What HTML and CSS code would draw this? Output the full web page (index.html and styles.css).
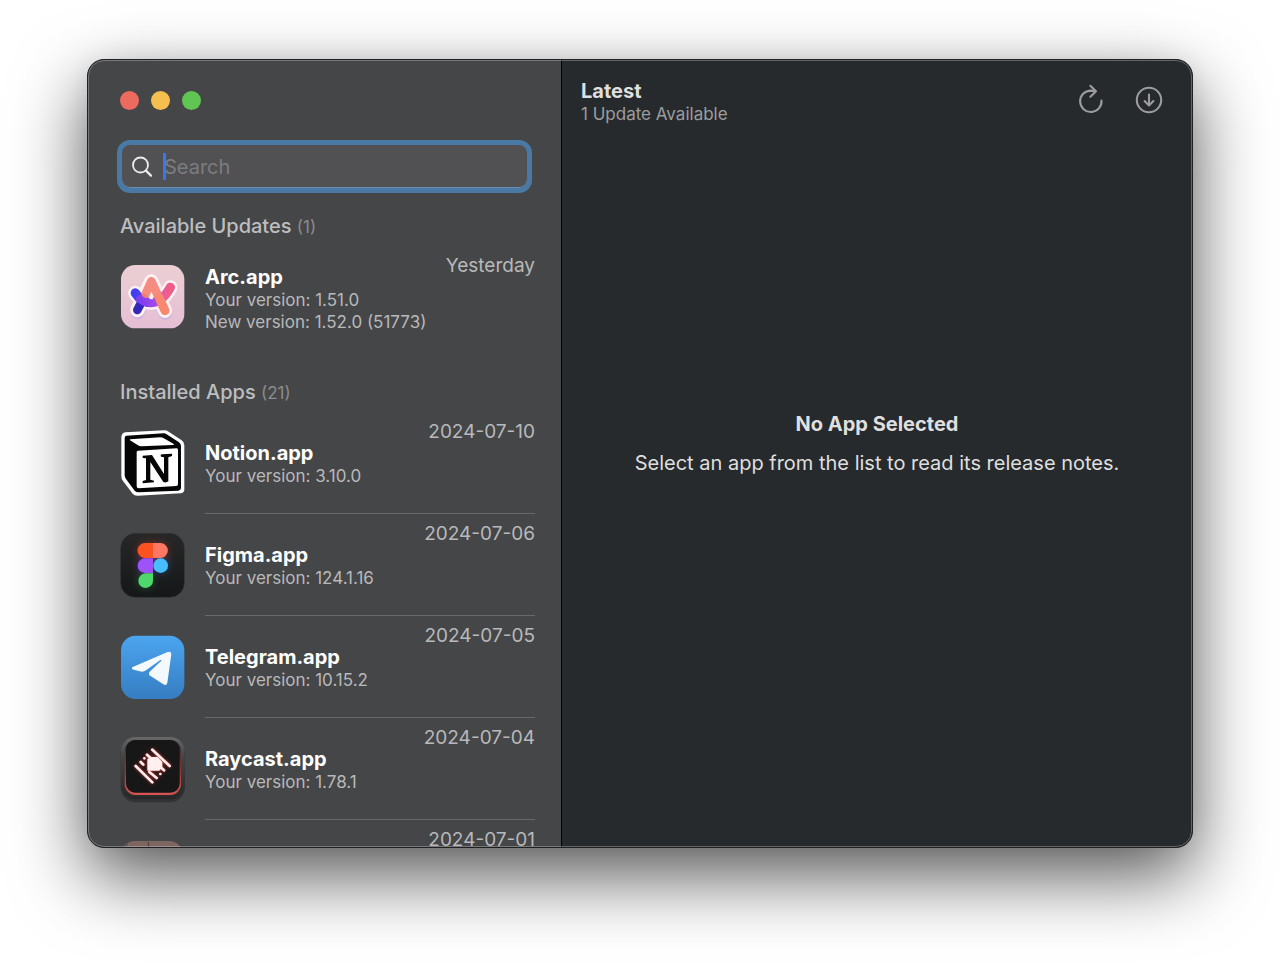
FILE: index.html
```html
<!DOCTYPE html>
<html lang="en">
<head>
<meta charset="utf-8">
<title>Latest</title>
<link rel="stylesheet" href="styles.css">
</head>
<body>
<main class="window">
  <aside class="sidebar">
    <div class="lights">
      <button class="light close" aria-label="Close"></button>
      <button class="light minimize" aria-label="Minimize"></button>
      <button class="light zoom" aria-label="Zoom"></button>
    </div>
    <label class="search">
      <svg class="search-icon" viewBox="0 0 22 22" fill="none" stroke="#ececec" stroke-width="1.8" stroke-linecap="round"><circle cx="8.500" cy="9" r="7.500"/><path d="M14 14.600L19 19.600" stroke-width="2.2"/></svg>
      <span class="caret"></span>
      <input class="search-input" type="text" placeholder="Search" aria-label="Search">
    </label>

    <h2 class="section-title">Available Updates <span class="count">(1)</span></h2>
    <ul class="apps">
      <li class="app">
        <svg class="app-icon" viewBox="30 48 192 192">
          <defs>
            <linearGradient id="arc-bg" x2="0" y2="1"><stop stop-color="#ebcfd3"/><stop offset="1" stop-color="#e5bfd5"/></linearGradient>
            <linearGradient id="arc-a" x2="0" y2="1"><stop stop-color="#f28278"/><stop offset="1" stop-color="#f98a70"/></linearGradient>
            <linearGradient id="arc-s" x1="60" y1="0" x2="195" y2="0" gradientUnits="userSpaceOnUse"><stop stop-color="#3340f0"/><stop offset=".3" stop-color="#5a3cf5"/><stop offset=".55" stop-color="#b45be0"/><stop offset=".8" stop-color="#ee5f8e"/><stop offset="1" stop-color="#ee5a86"/></linearGradient>
          </defs>
          <rect x="33" y="45" width="190" height="190" rx="43" fill="url(#arc-bg)"/>
          <g fill="none" stroke-linecap="round" stroke-linejoin="round">
            <g stroke="#b09bf0" stroke-width="42" opacity=".35" transform="translate(0 7)"><path d="M82 180L124 94L165 182"/></g>
            <g stroke="#fff1f2" stroke-width="43"><path d="M82 180L124 94L165 182"/><path d="M76 129Q94 158 124 158Q158 155 181 112"/></g>
            <path d="M82 180L101 144" stroke="#3428b8" stroke-width="26"/>
            <path d="M76 129Q94 158 124 158Q158 155 181 112" stroke="url(#arc-s)" stroke-width="28"/>
            <path d="M107 132L124 94L165 182" stroke="url(#arc-a)" stroke-width="26" opacity=".92"/>
            <path d="M90 147Q106 160 124 159Q137 158 145 152" stroke="#9a42ec" stroke-width="24" opacity=".65"/>
            <path d="M147 143L165 182" stroke="#f98870" stroke-width="26"/>
          </g>
          <path d="M124 135L118 147Q124 149 130 147Z" fill="#fff1f2"/>
        </svg>
        <div class="info">
          <div class="text"><h3 class="name">Arc.app</h3><p class="version">Your version: 1.51.0</p><p class="version">New version: 1.52.0 (51773)</p></div>
          <time class="date">Yesterday</time>
        </div>
      </li>
    </ul>

    <h2 class="section-title">Installed Apps <span class="count">(21)</span></h2>
    <ul class="apps lined">
      <li class="app">
        <svg class="app-icon" viewBox="30 33 192 192">
          <path d="M46 34L163 28Q170 28 176 32L214 57Q223 63 223 72V205Q223 216 212 217L84 224Q74 225 68 218L39 180Q34 173 34 164V48Q35 36 46 34Z" fill="#fff"/>
          <path d="M49 44L161 37Q166 37 170 40L207 64Q213 69 213 75V201Q213 208 205 209L85 214Q78 214 74 209L48 174Q44 169 44 162V51Q44 45 49 44Z" fill="#050505"/>
          <path d="M61 55L151 49Q156 49 160 51L190 68Q194 72 188 72L94 76Q88 76 84 73L60 58Q58 56 61 55Z" fill="#fff"/>
          <path d="M84 89L200 82Q204 82 204 87V190Q204 195 199 195L86 202Q80 202 80 196V94Q80 90 84 89Z" fill="#fff"/>
          <path d="M98 104L126 102L162 159V109L153 107Q150 101 156 100L186 98V105L175 109V181Q168 186 160 183L121 123V176L132 179V184L98 187V180L108 177V112L98 111Z" fill="#050505"/>
        </svg>
        <div class="info">
          <div class="text"><h3 class="name">Notion.app</h3><p class="version">Your version: 3.10.0</p></div>
          <time class="date">2024-07-10</time>
        </div>
      </li>
      <li class="app">
        <svg class="app-icon" viewBox="30 33 192 192">
          <defs>
            <linearGradient id="fig-bg" x2="0" y2="1"><stop stop-color="#282727"/><stop offset="1" stop-color="#151718"/></linearGradient>
            <filter id="fig-glow" x="-50%" y="-50%" width="200%" height="200%"><feGaussianBlur stdDeviation="12"/></filter>
          </defs>
          <rect x="32" y="31" width="191" height="192" rx="44" fill="url(#fig-bg)" stroke="#343434" stroke-width="2"/>
          <g opacity=".35" filter="url(#fig-glow)"><rect x="82" y="61" width="92" height="44" rx="22" fill="#f43"/><circle cx="106" cy="128" r="24" fill="#84f"/><circle cx="153" cy="128" r="22" fill="#28f"/><circle cx="106" cy="174" r="22" fill="#2b5"/></g>
          <path d="M129 60H105a22.500 22.500 0 0 0 0 45H129Z" fill="#fa5220"/>
          <path d="M129 60H151a22.500 22.500 0 0 1 0 45H129Z" fill="#ff7863"/>
          <path d="M129 106H105a22 22 0 0 0 0 44H129Z" fill="#9d52fb"/>
          <circle cx="152" cy="128" r="22" fill="#48bdfb"/>
          <path d="M129 151H106a22 22 0 1 0 23 22Z" fill="#4ed76b"/>
        </svg>
        <div class="info">
          <div class="text"><h3 class="name">Figma.app</h3><p class="version">Your version: 124.1.16</p></div>
          <time class="date">2024-07-06</time>
        </div>
      </li>
      <li class="app">
        <svg class="app-icon" viewBox="30 30 192 192">
          <defs><linearGradient id="tg-bg" x2="0" y2="1"><stop stop-color="#4ba5ef"/><stop offset="1" stop-color="#367dc2"/></linearGradient></defs>
          <rect x="33" y="29" width="190" height="190" rx="44" fill="url(#tg-bg)"/>
          <path d="M70 122L173 78Q184 74 184 85L172 170Q170 180 160 175L123 151Q113 145 119 137L154 104Q156 101 151 102L108 133Q102 137 96 137L71 131Q60 127 70 122Z" fill="#f4f9fd"/>
        </svg>
        <div class="info">
          <div class="text"><h3 class="name">Telegram.app</h3><p class="version">Your version: 10.15.2</p></div>
          <time class="date">2024-07-05</time>
        </div>
      </li>
      <li class="app">
        <svg class="app-icon" viewBox="30 24 192 192">
          <defs>
            <linearGradient id="ray-edge" x2="0" y2="1"><stop stop-color="#686868"/><stop offset=".3" stop-color="#464646"/><stop offset="1" stop-color="#272728"/></linearGradient>
            <linearGradient id="ray-red" x2="0" y2="1"><stop offset=".1" stop-color="#333"/><stop offset=".55" stop-color="#8c3333"/><stop offset="1" stop-color="#d95553"/></linearGradient>
            <filter id="ray-glow" x="-30%" y="-30%" width="160%" height="160%"><feGaussianBlur stdDeviation="4"/></filter>
            <g id="ray-mark">
              <path d="M127 59L179 108M111 74L162 121M103 85h.1M92 96L100 104M77 108L127 157M118 126L140 144M151 132h.1" fill="none" stroke-width="8" stroke-linecap="round"/>
              <path d="M112 88L121 81H143L157 96V111L148 122H112Z" stroke="none"/>
            </g>
          </defs>
          <rect x="32" y="24" width="193" height="193" rx="45" fill="#2a2a2b" opacity=".65"/>
          <rect x="33" y="21" width="191" height="187" rx="43" fill="url(#ray-edge)"/>
          <rect x="44" y="30" width="169" height="165" rx="33" fill="url(#ray-red)"/>
          <rect x="48" y="30" width="161" height="158" rx="28" fill="#171717"/>
          <use href="#ray-mark" stroke="#e23232" fill="#e23232" filter="url(#ray-glow)"/>
          <use href="#ray-mark" stroke="#fff0ef" fill="#fff0ef"/>
        </svg>
        <div class="info">
          <div class="text"><h3 class="name">Raycast.app</h3><p class="version">Your version: 1.78.1</p></div>
          <time class="date">2024-07-04</time>
        </div>
      </li>
      <li class="app">
        <svg class="app-icon" viewBox="0 0 64 64"><rect x="1" y="1" width="62" height="62" rx="14" fill="#7d6562"/><path d="M5 7L8 4M28 2L29 8" fill="none" stroke="#443b3b"/></svg>
        <div class="info">
          <div class="text"></div>
          <time class="date">2024-07-01</time>
        </div>
      </li>
    </ul>
  </aside>

  <section class="detail">
    <header class="toolbar">
      <div class="heading"><h1 class="title">Latest</h1><p class="subtitle">1 Update Available</p></div>
      <button class="tool" aria-label="Check for updates"><svg viewBox="0 0 28 28"><path d="M24.500 14.500A10.700 10.700 0 1 1 13.800 4.600L18.700 5M13.400-.2L19 5.200L13.400 10.700"/></svg></button>
      <button class="tool" aria-label="Update all"><svg viewBox="0 0 28 28"><circle cx="14" cy="14" r="12.200"/><path d="M14 8.500V19M9.600 15L14 19.400L18.400 15"/></svg></button>
    </header>
    <div class="empty">
      <h2 class="empty-title">No App Selected</h2>
      <p class="empty-text">Select an app from the list to read its release notes.</p>
    </div>
  </section>
</main>
</body>
</html>
```
FILE: styles.css
```css
* { box-sizing: border-box; margin: 0; padding: 0; }

body {
  display: flex;
  height: 100vh;
  padding: 59px 87px 116px;
  overflow: hidden;
  background: #fff;
  color: #dfdfdf;
  font-family: Inter, "Noto Sans", sans-serif;
}

button { border: 0; background: none; }
h1, h2, h3 { font-weight: 700; }
ul { list-style: none; }

.window {
  position: relative;
  display: flex;
  flex: 1;
  min-width: 0;
  overflow: hidden;
  border: 1px solid #202122;
  border-radius: 17px;
  background: #272a2d;
  box-shadow: 0 28px 72px rgba(0, 0, 0, .66), 0 0 24px rgba(0, 0, 0, .06);
}

.window::after {
  content: "";
  position: absolute;
  inset: 0;
  border: 1px solid rgba(255, 255, 255, .28);
  border-radius: 16px;
  pointer-events: none;
}

.sidebar {
  flex: 0 0 474px;
  padding: 31px 26px 0 32px;
  overflow: hidden;
  border-right: 1px solid #000;
  background: #454648;
}

.lights { display: flex; gap: 12px; height: 20px; }
.light { width: 19px; height: 19px; border-radius: 50%; }
.close { background: #ed6a5e; }
.minimize { background: #f5bf4f; }
.zoom { background: #61c554; }

.search {
  position: relative;
  display: flex;
  align-items: center;
  gap: 10px;
  height: 53px;
  margin: 29px 3px 21px -3px;
  padding: 0 10px;
  border: 5px solid #4a79a5;
  border-radius: 13px;
  background: #515153;
  box-shadow: inset 0 -1px #698eaf;
}

.search-icon { flex: none; width: 22px; height: 22px; }

.search-input {
  flex: 1;
  min-width: 0;
  border: 0;
  outline: 0;
  background: none;
  color: #dfdfdf;
  font: 20px/24px Inter, "Noto Sans", sans-serif;
}

.search-input::placeholder { color: #7c7d7f; }

.caret {
  position: absolute;
  left: 41px;
  width: 3px;
  height: 27px;
  border-radius: 1px;
  background: #3478f6;
}

.section-title {
  margin-bottom: 7px;
  color: #bdbebf;
  font-size: 20px;
  font-weight: 500;
  line-height: 24px;
}

.count { color: #8b8c8e; font-size: 17px; font-weight: 400; }

.apps { margin-bottom: 32px; }
.app { display: flex; gap: 21px; height: 102px; }
.app-icon { flex: none; width: 64px; height: 64px; margin-top: 20px; overflow: visible; }

.info {
  display: flex;
  flex: 1;
  justify-content: space-between;
  min-width: 0;
  white-space: nowrap;
}

.lined .info { border-bottom: 1px solid #67686a; }
.text { align-self: center; padding-top: 3px; }
.name { color: #fff; font-size: 20px; line-height: 24px; }
.version { color: #b8b9ba; font-size: 17px; line-height: 22px; }
.date { padding-top: 8px; color: #b8b9ba; font-size: 19px; line-height: 24px; }

.detail { display: flex; flex: 1; flex-direction: column; min-width: 0; }

.toolbar {
  display: flex;
  align-items: flex-start;
  gap: 30px;
  padding: 19px 29px 0 19px;
}

.heading { flex: 1; }
.title { font-size: 20px; line-height: 24px; }
.subtitle { color: #9b9d9e; font-size: 17px; line-height: 22px; }
.tool { width: 28px; height: 28px; margin-top: 7px; }

.tool svg {
  display: block;
  overflow: visible;
  fill: none;
  stroke: #9b9c9e;
  stroke-width: 2.1;
  stroke-linecap: round;
  stroke-linejoin: round;
}

.empty {
  display: flex;
  flex: 1;
  flex-direction: column;
  align-items: center;
  justify-content: center;
  gap: 15px;
  padding-bottom: 86px;
  text-align: center;
}

.empty-title { font-size: 20px; line-height: 24px; }
.empty-text { font-size: 20px; line-height: 24px; }
```
